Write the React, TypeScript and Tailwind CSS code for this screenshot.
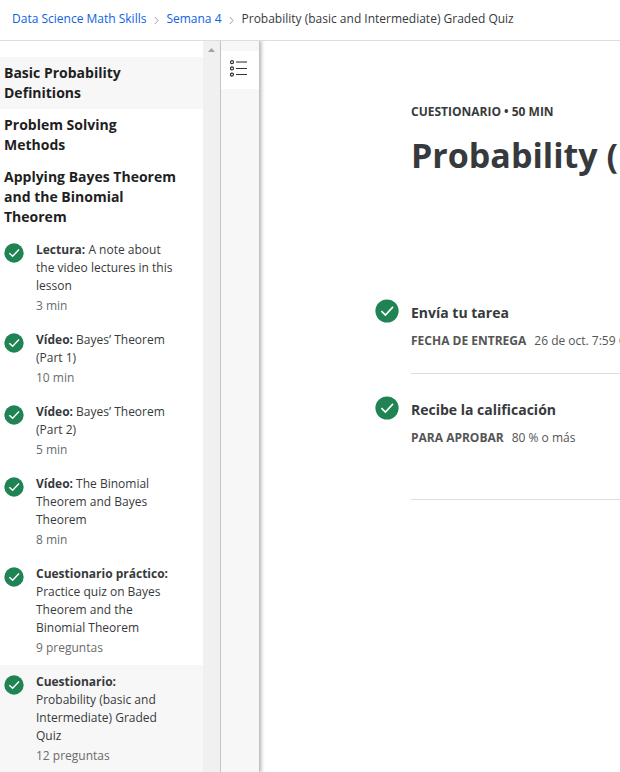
import React from 'react';

type Item = { kind: string; lines: string[]; meta: string; active?: boolean };

const sections: { lines: string[]; active?: boolean }[] = [
  { lines: ['Basic Probability', 'Definitions'], active: true },
  { lines: ['Problem Solving', 'Methods'] },
  { lines: ['Applying Bayes Theorem', 'and the Binomial', 'Theorem'] },
];

const items: Item[] = [
  { kind: 'Lectura:', lines: [' A note about', 'the video lectures in this', 'lesson'], meta: '3 min' },
  { kind: 'Vídeo:', lines: [' Bayes’ Theorem', '(Part 1)'], meta: '10 min' },
  { kind: 'Vídeo:', lines: [' Bayes’ Theorem', '(Part 2)'], meta: '5 min' },
  { kind: 'Vídeo:', lines: [' The Binomial', 'Theorem and Bayes', 'Theorem'], meta: '8 min' },
  { kind: 'Cuestionario práctico:', lines: ['', 'Practice quiz on Bayes', 'Theorem and the', 'Binomial Theorem'], meta: '9 preguntas' },
  { kind: 'Cuestionario:', lines: ['', 'Probability (basic and', 'Intermediate) Graded', 'Quiz'], meta: '12 preguntas', active: true },
];

function Check({ className }: { className: string }) {
  return (
    <svg viewBox="0 0 24 24" className={'shrink-0 ' + className} fill="none">
      <circle cx="12" cy="12" r="11.6" fill="#1f8354" />
      <path d="M6.4 12.2 10.4 16 18 7.8" stroke="#fff" strokeWidth="1.7" />
    </svg>
  );
}

function Chevron() {
  return (
    <svg viewBox="0 0 6 10" className="mt-0.5 h-[9px] w-[5px] shrink-0" fill="none">
      <path d="M1 .8 5 5 1 9.2" stroke="#8a8a8a" strokeWidth="1" />
    </svg>
  );
}

function Sidebar() {
  return (
    <aside className="w-[203px] shrink-0 overflow-hidden bg-white pt-4">
      {sections.map((s) => (
        <h2
          key={s.lines[0]}
          className={'px-1 py-1.5 text-sm/5 font-bold whitespace-nowrap text-[#1f1f1f] ' + (s.active ? 'bg-[#f7f7f7]' : '')}
        >
          {s.lines.map((l) => (
            <span key={l} className="block">{l}</span>
          ))}
        </h2>
      ))}
      {items.map((it, n) => (
        <div key={n} className={'flex gap-3 py-2 pl-1 whitespace-nowrap ' + (it.active ? 'bg-[#f7f7f7]' : '')}>
          <Check className="mt-0.5 h-5 w-5" />
          <div className="text-xs/[18px] text-[#373a3c]">
            {it.lines.map((l, i) => (
              <p key={i}>
                {i === 0 && <b className="font-bold">{it.kind}</b>}
                {l}
              </p>
            ))}
            <p className="mt-0.5 text-[#6b6b6b]">{it.meta}</p>
          </div>
        </div>
      ))}
    </aside>
  );
}

function Step({ title, label, value }: { title: string; label: string; value: string }) {
  return (
    <div className="flex gap-3">
      <Check className="h-6 w-6" />
      <div className="whitespace-nowrap">
        <h3 className="mt-1 text-sm/5 font-bold text-[#373a3c]">{title}</h3>
        <p className="mt-2 text-xs/5 text-[#555]">
          <span className="mr-2 font-bold">{label}</span>
          <span>{value}</span>
        </p>
      </div>
    </div>
  );
}

export default function App() {
  return (
    <div className="flex h-[772px] w-[620px] flex-col overflow-hidden bg-white font-['Open_Sans',sans-serif]">
      <header className="flex h-[41px] shrink-0 items-center border-b border-[#dedede] pb-0.5 pl-3 text-xs whitespace-nowrap text-[#0f62e4]">
        <span>Data Science Math Skills</span>
        <span className="flex w-5 justify-center"><Chevron /></span>
        <span>Semana 4</span>
        <span className="flex w-5 justify-center"><Chevron /></span>
        <span className="text-[#373a3c]">Probability (basic and Intermediate) Graded Quiz</span>
      </header>
      <div className="flex min-h-0 flex-1">
        <Sidebar />
        <div className="flex w-[17px] shrink-0 justify-center bg-[#f0f0f0] pt-[7px]">
          <svg viewBox="0 0 7 4" className="h-1 w-[7px]"><path d="M0 4 3.5 0 7 4Z" fill="#a3a3a3" /></svg>
        </div>
        <div className="w-[39px] shrink-0 border-l border-[#c4c4c4] bg-[#f7f7f7] pt-2.5 shadow-[1px_0_4px_1px_rgba(0,0,0,0.32)] [clip-path:inset(0_-6px_0_0)]">
          <div className="h-[38px] bg-white pt-2 pl-[9px]">
            <svg viewBox="0 0 18 19" className="h-[19px] w-[18px]" fill="none" stroke="#333">
              <circle cx="2" cy="3.2" r="1.5" strokeWidth="1.2" />
              <circle cx="2" cy="9.4" r="1.5" strokeWidth="1.2" />
              <circle cx="2" cy="15.6" r="1.5" strokeWidth="1.2" />
              <path d="M6 3h11" stroke="#777" strokeWidth="1.6" />
              <path d="M6 9.5h11M6 15.5h11" />
            </svg>
          </div>
        </div>
        <main className="min-w-0 flex-1 overflow-hidden pl-[116px] whitespace-nowrap">
          <div className="pt-[61px] pl-9">
            <p className="text-xs/5 font-bold text-[#373a3c]">CUESTIONARIO • 50 MIN</p>
            <h1 className="mt-[9px] text-[34px]/[48px] font-bold text-[#373a3c]">Probability (</h1>
          </div>
          <div className="mt-[120px]">
            <Step title="Envía tu tarea" label="FECHA DE ENTREGA" value="26 de oct. 7:59 C" />
          </div>
          <div className="mt-[22px] ml-9 h-px bg-[#dedede]" />
          <div className="mt-[22px]">
            <Step title="Recibe la calificación" label="PARA APROBAR" value="80 % o más" />
          </div>
          <div className="mt-[51px] ml-9 h-px bg-[#dedede]" />
        </main>
      </div>
    </div>
  );
}
